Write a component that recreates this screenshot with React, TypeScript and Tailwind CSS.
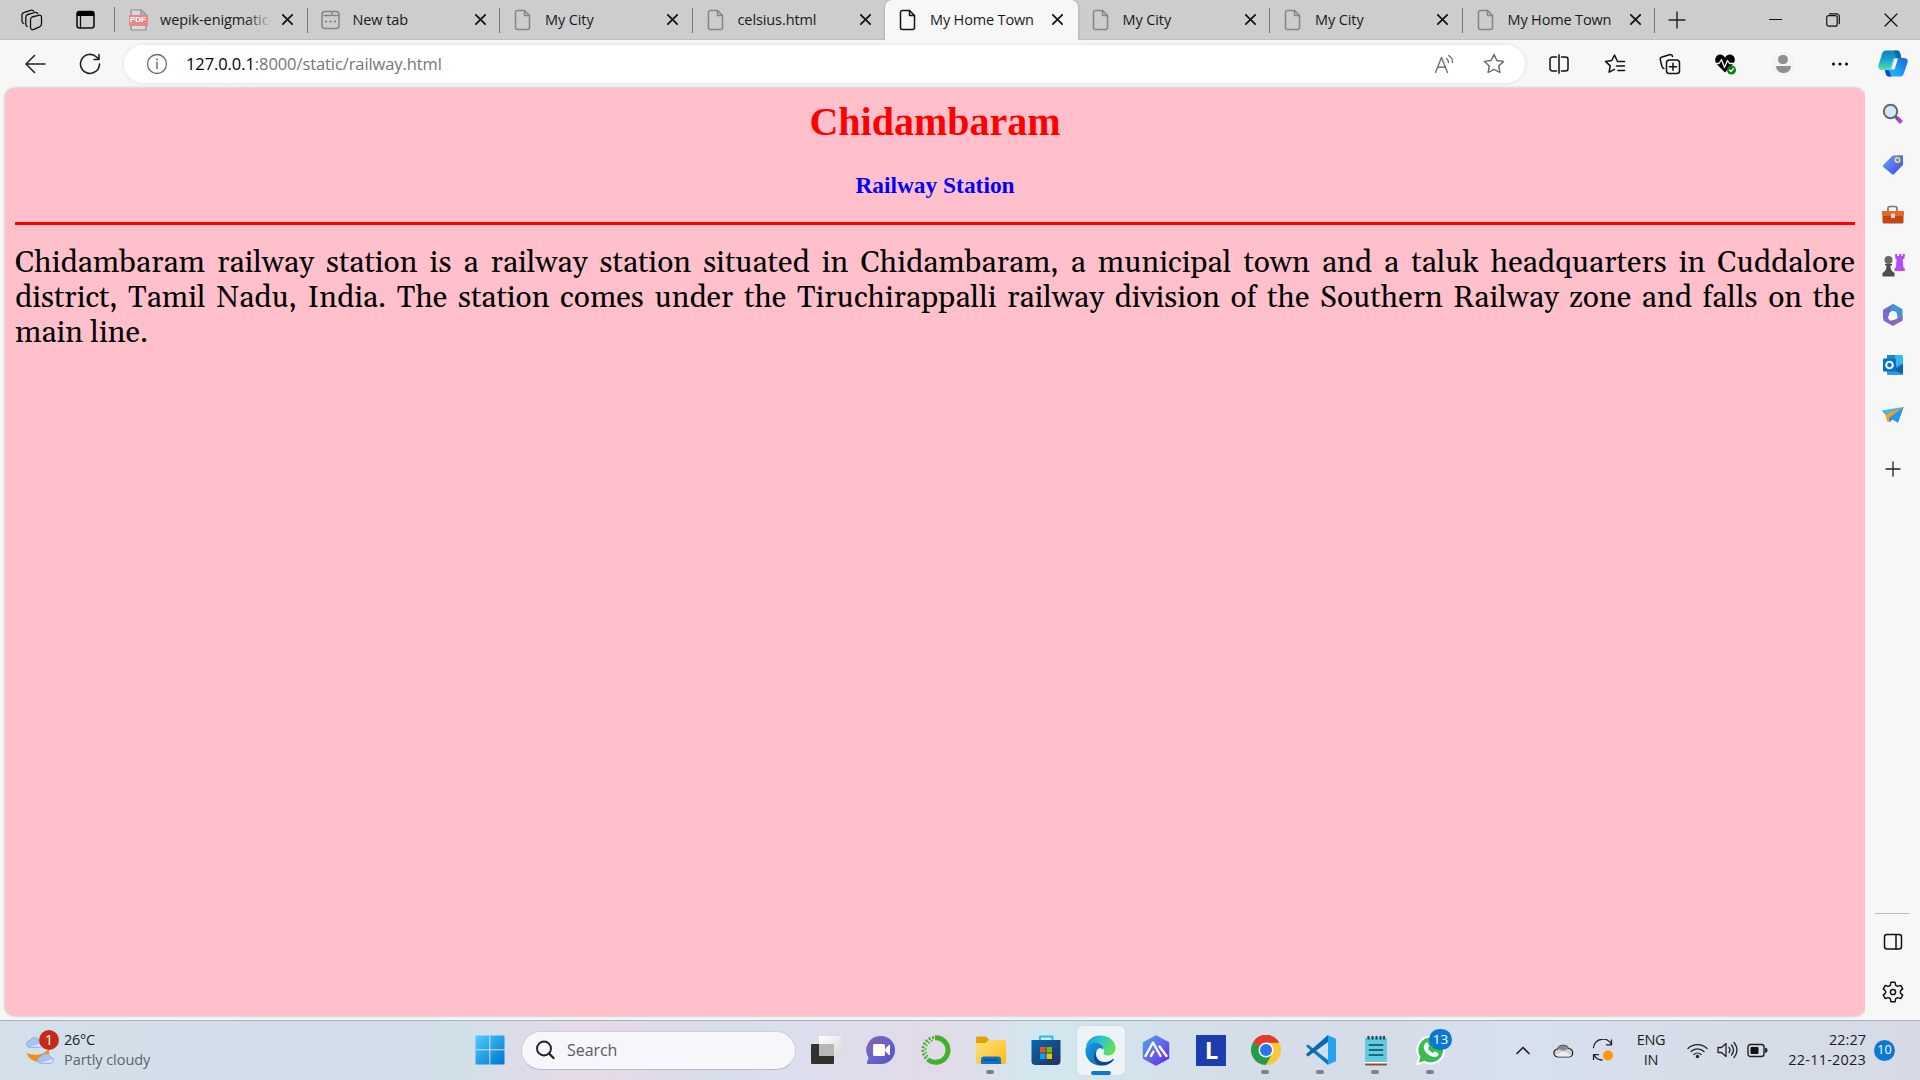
import React from "react";

type Kids = { children?: React.ReactNode; className?: string };

const ui = "font-['Open_Sans','Noto_Sans',sans-serif]";

function Cell({ children, className = "" }: Kids) {
  return <div className={`flex shrink-0 items-center justify-center ${className}`}>{children}</div>;
}

function Svg({ w, h, vb, children, className = "" }: Kids & { w: number; h: number; vb?: string }) {
  return (
    <svg
      width={w}
      height={h}
      viewBox={vb ?? `0 0 ${w} ${h}`}
      fill="none"
      stroke="none"
      strokeLinecap="round"
      strokeLinejoin="round"
      className={`shrink-0 ${className}`}
    >
      {children}
    </svg>
  );
}

function FileIcon({ color }: { color: string }) {
  return (
    <Svg w={18} h={22}>
      <path d="M3.5 1.5h7l5 5v12a2 2 0 0 1-2 2h-10a2 2 0 0 1-2-2v-15a2 2 0 0 1 2-2z" stroke={color} strokeWidth="1.5" />
      <path d="M10.5 1.8v4.7h4.8" stroke={color} strokeWidth="1.5" />
    </Svg>
  );
}

function PdfIcon() {
  return (
    <div className="relative h-[22px] w-[19px]">
      <Svg w={19} h={22}>
        <path d="M3 1h9l5 5v14a1 1 0 0 1-1 1H3a1 1 0 0 1-1-1V2a1 1 0 0 1 1-1z" fill="#d9d9d9" stroke="#8c8c8c" strokeWidth="1.2" />
        <path d="M12 1v5h5z" fill="#bbb" stroke="#8c8c8c" />
      </Svg>
      <span className="absolute left-0 top-[6px] flex h-[11px] w-[19px] items-center justify-center bg-[#e88689] font-['Liberation_Sans',sans-serif] text-[8px] leading-none font-bold text-white">
        PDF
      </span>
    </div>
  );
}

function NewTabIcon() {
  return (
    <Svg w={19} h={20}>
      <rect x="1" y="1.5" width="17" height="17" rx="3" stroke="#858585" strokeWidth="1.5" />
      <path d="M3 5.500h6.500q1.500 0 1.500-1.500V2M11 4q0 1.500 1.500 1.500H18" stroke="#858585" strokeWidth="1.3" />
      <path d="M5 11.5h.01M9.5 11.5h.01M14 11.5h.01" stroke="#777" strokeWidth="2.2" />
    </Svg>
  );
}

function CloseX({ size = 11, sw = 1.7 }: { size?: number; sw?: number }) {
  return (
    <Svg w={size} h={size} vb="0 0 11 11">
      <path d="M.8.8l9.4 9.4M10.2.8L.8 10.2" stroke="#111" strokeWidth={sw} />
    </Svg>
  );
}

const tabs = [
  { title: "wepik-enigmatic-", kind: "pdf" },
  { title: "New tab", kind: "new" },
  { title: "My City", kind: "file" },
  { title: "celsius.html", kind: "file" },
  { title: "My Home Town", kind: "active" },
  { title: "My City", kind: "file" },
  { title: "My City", kind: "file" },
  { title: "My Home Town", kind: "file" },
];

function Tab({ title, kind, sep }: { title: string; kind: string; sep: boolean }) {
  const active = kind === "active";
  return (
    <div
      className={`relative flex h-10 w-[192.5px] shrink-0 items-center pl-[13px] ${active ? "rounded-t-[7px] bg-[#f7f7f7] shadow-[0_0_3px_rgba(0,0,0,0.25)]" : ""}`}
    >
      {active && <span className="absolute -bottom-[3px] left-0 h-[4px] w-full bg-[#f7f7f7]" />}
      <div className="flex w-[20px] shrink-0 justify-center">
        {kind === "pdf" ? <PdfIcon /> : kind === "new" ? <NewTabIcon /> : <FileIcon color={active ? "#111" : "#858585"} />}
      </div>
      <div className="relative ml-[12px] w-[113px] overflow-hidden text-[14.5px] leading-[22px] whitespace-nowrap text-[#1a1a1a]">
        <span className={title === "My Home Town" ? "tracking-[-0.15px]" : "tracking-[-0.1px]"}>{title}</span>
        {kind === "pdf" && <span className="absolute top-0 right-0 h-full w-[28px] bg-linear-to-r from-transparent to-[#cdcdcd]" />}
      </div>
      <div className="ml-[9px]">
        <CloseX />
      </div>
      {sep && <span className="absolute top-[8px] right-0 h-[25px] w-px bg-[#767676]" />}
    </div>
  );
}

function TabStrip() {
  return (
    <div className="flex h-10 items-center border-b border-[#bdbdbd] bg-[#cdcdcd]">
      <Cell className="w-[64px]">
        <Svg w={22} h={22}>
          <g stroke="#111" strokeWidth="1.3">
            <path d="M11 8l6.500-1.700c2-.5 3 .2 3 2v6.500c0 1.500-.7 2.500-2 3l-5.500 2.500c-2 .8-3.500 0-3.500-2V11c0-1.700.3-2.600 1.500-3z" />
            <path d="M6.300 17.500c-1-.4-1.500-1.200-1.500-2.500V8.500c0-1.700.5-2.600 2-3l7-2c1.500-.4 2.500 0 3 1.200" />
            <path d="M2.700 14.500C1.500 14 1 13.200 1 12V6.300C1 4.600 1.700 3.700 3.200 3.300l6.500-2c1.500-.4 2.500 0 3 1" />
          </g>
        </Svg>
      </Cell>
      <Cell className="w-[42px]">
        <Svg w={19} h={19}>
          <rect x="1" y="1.500" width="17" height="16.500" rx="2.500" stroke="#111" strokeWidth="1.600" />
          <path d="M1 3.500A2.500 2.500 0 0 1 3.500 1h12A2.500 2.500 0 0 1 18 3.500V6H1z" fill="#000" />
          <path d="M4.500 6v12" stroke="#111" strokeWidth="1.300" />
        </Svg>
      </Cell>
      <div className="ml-[8px] h-[25px] w-px bg-[#767676]" />
      {tabs.map((t, i) => (
        <Tab key={i} {...t} sep={i !== 3 && i !== 4} />
      ))}
      <Cell className="w-[44px]">
        <Svg w={18} h={18}>
          <path d="M9 1v16M1 9h16" stroke="#222" strokeWidth="1.400" />
        </Svg>
      </Cell>
      <div className="ml-auto flex">
        <Cell className="w-[57px]">
          <Svg w={13} h={3}>
            <path d="M.5 1.500h12" stroke="#111" strokeWidth="1.200" />
          </Svg>
        </Cell>
        <Cell className="w-[57px]">
          <Svg w={14} h={14}>
            <rect x=".7" y="2.700" width="10.500" height="10.500" rx="2" stroke="#111" strokeWidth="1.200" />
            <path d="M3.500.8h7A2.800 2.800 0 0 1 13.300 3.600v7" stroke="#111" strokeWidth="1.200" />
          </Svg>
        </Cell>
        <Cell className="w-[59px]">
          <CloseX size={14} sw={1} />
        </Cell>
      </div>
    </div>
  );
}

const starPath = "M11 1.500l2.900 6 6.600.9-4.800 4.600 1.200 6.500L11 16.400l-5.900 3.100 1.200-6.500L1.500 8.400l6.600-.9z";

function Toolbar() {
  return (
    <div className="flex h-[48px] items-start bg-[#f7f7f7] pt-[5px]">
      <Cell className="h-[37px] w-[70px]">
        <Svg w={21} h={20}>
          <path d="M20 10H1.500M9.500 1.500L1 10l8.500 8.500" stroke="#222" strokeWidth="1.500" />
        </Svg>
      </Cell>
      <Cell className="h-[37px] w-[40px]">
        <Svg w={22} h={22}>
          <path d="M20.500 11A9.500 9.500 0 1 1 17.500 4L19.500 6M20 1.500V6.500H15" stroke="#222" strokeWidth="1.600" />
        </Svg>
      </Cell>
      <div className="ml-[14px] flex h-[38px] w-[1401px] shrink-0 items-center rounded-full bg-white shadow-[0_0_4px_rgba(0,0,0,0.1)]">
        <Cell className="w-[66px]">
          <Svg w={22} h={22}>
            <circle cx="11" cy="11" r="9.500" stroke="#6b6b6b" strokeWidth="1.300" />
            <path d="M11 9.500v6" stroke="#6b6b6b" strokeWidth="1.500" />
            <circle cx="11" cy="6.500" r="1" fill="#6b6b6b" />
          </Svg>
        </Cell>
        <div className="-ml-[4px] text-[16.500px] leading-[24px] tracking-[-0.09px] whitespace-nowrap text-[#767676]">
          <span className="text-black">127.0.0.1</span>:8000/static/railway.html
        </div>
        <Cell className="ml-auto w-[50px]">
          <Svg w={20} h={20}>
            <g stroke="#707070" strokeWidth="1.400">
              <path d="M1.500 18.500L7.500 3.500l6 15M3.700 13.300h7.600" />
              <path d="M12.500 4.500c1.500 1 2 2.400 2 4M14.500 1.500c2.600 1.400 4 3.700 4 7" />
            </g>
          </Svg>
        </Cell>
        <Cell className="mr-[6px] w-[50px]">
          <Svg w={22} h={22}>
            <path d={starPath} stroke="#666" strokeWidth="1.400" />
          </Svg>
        </Cell>
      </div>
      <Cell className="h-[37px] w-[68px]">
        <Svg w={20} h={20}>
          <path d="M7.500 3H3.500a2.500 2.500 0 0 0-2.500 2.500v9A2.500 2.500 0 0 0 3.500 17h4M12.500 3h4A2.500 2.500 0 0 1 19 5.500v9a2.500 2.500 0 0 1-2.500 2.500h-4M10 .8v18.400" stroke="#111" strokeWidth="1.500" />
        </Svg>
      </Cell>
      <Cell className="h-[37px] w-[44px]">
        <Svg w={22} h={22}>
          <path d="M13 7.400L10.500 2 7.800 7.500 1.500 8.400l4.700 4.500-1.100 6.300 5.400-2.900M13.500 8.500h7M12.500 13h8M14 17.500h6.500" stroke="#111" strokeWidth="1.500" />
        </Svg>
      </Cell>
      <Cell className="h-[37px] w-[66px]">
        <Svg w={22} h={22}>
          <rect x="7.500" y="7" width="13" height="13.500" rx="2.800" stroke="#111" strokeWidth="1.500" />
          <path d="M14 10.200v7M10.500 13.700h7M4.800 15.500c-1-.3-1.500-1-1.800-2L1.300 6.800C1 5.300 1.700 4.300 3 4l7.500-2.300c1.500-.4 2.700.3 3 1.800" stroke="#111" strokeWidth="1.500" />
        </Svg>
      </Cell>
      <Cell className="h-[37px] w-[44px]">
        <Svg w={23} h={22}>
          <path d="M11 19.500L2.500 11C-.5 7 2 1.500 6 1.500c2.500 0 4 1.500 5 3 1-1.500 2.500-3 5-3 4 0 6.500 5 3.500 9z" fill="#000" />
          <path d="M0 10.500h5l2.500-4 3 8 3-7 2 3H21" stroke="#f7f7f7" strokeWidth="1.300" />
          <circle cx="17.500" cy="17" r="4.500" fill="#107c10" />
          <path d="M15.500 17l1.400 1.500 2.700-3" stroke="#fff" strokeWidth="1.200" />
        </Svg>
      </Cell>
      <Cell className="h-[37px] w-[72px]">
        <div className="flex h-[28px] w-[28px] flex-col items-center justify-center gap-[2px] rounded-full border border-white bg-[#f4f4f4]">
          <span className="h-[9px] w-[10px] rounded-full bg-[#8f8f8f]" />
          <span className="h-[7px] w-[15px] rounded-t-[2px] rounded-b-full bg-[#8f8f8f]" />
        </div>
      </Cell>
      <Cell className="h-[37px] w-[42px]">
        <Svg w={18} h={4}>
          <circle cx="2.500" cy="2" r="1.600" fill="#111" />
          <circle cx="9" cy="2" r="1.600" fill="#111" />
          <circle cx="15.500" cy="2" r="1.600" fill="#111" />
        </Svg>
      </Cell>
      <Cell className="ml-[4px] h-[37px] w-[55px]">
        <Svg w={30} h={27}>
          <defs>
            <linearGradient id="cpA" x1="0" y1="0" x2="0" y2="1">
              <stop offset="0" stopColor="#0a7fb8" />
              <stop offset=".5" stopColor="#15a8d4" />
              <stop offset="1" stopColor="#5fe0a0" />
            </linearGradient>
            <linearGradient id="cpB" x1="1" y1="0" x2="0" y2="1">
              <stop offset="0" stopColor="#2264d8" />
              <stop offset=".6" stopColor="#1aa2f5" />
              <stop offset="1" stopColor="#27c4fb" />
            </linearGradient>
          </defs>
          <path d="M8 .5h11c2 0 3 1.500 3.500 4l.8 3.500h-5c-2 0-3 1-3.500 3l-1.500 6c-.6 2-1.500 3-3.500 3H4c-3 0-4.300-2-3.400-5.500L4 4C4.700 1.600 6 .5 8 .5z" fill="url(#cpA)" />
          <path d="M22 26.500H11c-2 0-3-1.500-3.500-4L7 20h3c2 0 3-1 3.500-3L15.300 11c.6-2 1.500-3 3.500-3H26c3 0 4.300 1.500 3.400 5L26 23c-.7 2.400-2 3.500-4 3.500z" fill="url(#cpB)" />
          <path d="M16.500 8.500h3.500l-3.500 11h-3.500z" fill="#f7f7f7" />
          <path d="M16 .5h3c2 0 3 1.500 3.500 4l.8 3.500h-4C17 8 17 3 16 .5z" fill="#096ca8" />
          <path d="M7 20h3.500c1.500 1 1.500 5 3.500 6.500h-3c-2 0-3-1.500-3.500-4z" fill="#1746c7" />
        </Svg>
      </Cell>
    </div>
  );
}

function Sidebar() {
  return (
    <div className="flex w-[55px] shrink-0 flex-col items-center bg-[#f7f7f7]">
      <Cell className="h-[51px]">
        <Svg w={22} h={22}>
          <path d="M14.500 14.500l5 5" stroke="#b13cf0" strokeWidth="4" strokeLinecap="butt" />
          <path d="M13 13l2.500 2.500" stroke="#666" strokeWidth="2.500" />
          <circle cx="8.500" cy="8.500" r="6.700" fill="#cfe9fb" stroke="#666" strokeWidth="2" />
        </Svg>
      </Cell>
      <Cell className="h-[51px]">
        <Svg w={22} h={22}>
          <defs>
            <linearGradient id="tagG" x1="0" y1="0" x2="1" y2="1">
              <stop offset="0" stopColor="#70a5ff" />
              <stop offset="1" stopColor="#3848df" />
            </linearGradient>
          </defs>
          <path d="M11.500 1.500L19.500 1q1.500 0 1.500 1.500V10q0 1-.8 1.800l-8 8.200q-1.200 1.200-2.400 0L1.300 13q-1-1 0-2L10 2.200q.6-.6 1.500-.7z" fill="url(#tagG)" />
          <circle cx="15.500" cy="6" r="2.200" stroke="#ffe04f" strokeWidth="1.500" fill="#667bd8" />
        </Svg>
      </Cell>
      <Cell className="h-[50px]">
        <Svg w={24} h={20}>
          <path d="M7 6V3.500A2 2 0 0 1 9 1.500h5a2 2 0 0 1 2 2V6" stroke="#777" strokeWidth="1.700" />
          <rect x="1.500" y="6" width="21" height="12.500" rx="1.500" fill="#c24813" />
          <path d="M1 6h22v3q0 2-2 2H3q-2 0-2-2z" fill="#e8672a" />
          <rect x="10" y="8.500" width="4" height="4.500" rx=".8" fill="#ddd" />
        </Svg>
      </Cell>
      <Cell className="h-[50px]">
        <Svg w={24} h={24}>
          <path d="M14 1h2.200v2h2V1h2.200v2h1.300V1H24l-.7 5h-1.500l.5 8 1.500 1.500V18H13.500v-2.500L15 14l.5-8h-1z" fill="#b84df3" />
          <circle cx="7.500" cy="7" r="4" fill="#686868" />
          <path d="M4 11h7v1.500H9.500c0 4 1 5.500 4 7.500v3.500h-12V20c3-2 4-3.500 4-7.500H4z" fill="#4d4d4d" />
        </Svg>
      </Cell>
      <Cell className="h-[50px]">
        <Svg w={22} h={22}>
          <path d="M11 0l9 5v5l-5-3-5-.5L5 14l-4 .5V6z" fill="#5b62c8" />
          <path d="M11 0l9.500 5.500v11L16 19l-1-9-8-4z" fill="#4094d8" />
          <path d="M20.500 12v4.500L11 22l-8-4.500 9-1.500z" fill="#8d65bd" />
          <path d="M1 6l6-3.500L6 14l5 7.500L1.500 16.500z" fill="#8367d2" />
          <circle cx="11" cy="11" r="4" fill="#f7f7f7" />
        </Svg>
      </Cell>
      <Cell className="h-[50px]">
        <Svg w={22} h={22}>
          <rect x="5" y="1" width="16" height="14" rx="1.500" fill="#35b8f1" />
          <path d="M5 1h8v7H5z" fill="#1689d4" />
          <path d="M5 10l8 3 8-4.500V20q0 1-1 1H6q-1 0-1-1z" fill="#2b9be3" />
          <path d="M11 16l10-6v10z" fill="#0f5fa8" />
          <rect x="1" y="4.500" width="13" height="13" rx="1.300" fill="#0873c5" />
          <circle cx="7.500" cy="11" r="3.300" stroke="#fff" strokeWidth="2" />
        </Svg>
      </Cell>
      <Cell className="h-[50px]">
        <Svg w={23} h={18}>
          <path d="M.5 4.500L22.500 1 6.500 11z" fill="#46b5f4" />
          <path d="M22.500 1L17 16.500l-5.500-3L8 16.500 6.500 10z" fill="#2887e8" />
          <path d="M22.500 1L4.500 8.500l1.800 8 2.500-5z" fill="#f5a50b" />
          <path d="M22.500 1L9 11l3 2.500 5 3z" fill="#3093ed" />
        </Svg>
      </Cell>
      <Cell className="mt-[3px] h-[52px]">
        <Svg w={16} h={16}>
          <path d="M8 1v14M1 8h14" stroke="#222" strokeWidth="1.300" />
        </Svg>
      </Cell>
      <div className="mt-auto h-px w-[35px] bg-[#bcbcbc]" />
      <Cell className="mt-[3px] h-[50px]">
        <Svg w={20} h={18}>
          <rect x="1.500" y="1.500" width="17" height="14.500" rx="2.500" stroke="#111" strokeWidth="1.500" />
          <path d="M13 2v14" stroke="#111" strokeWidth="1.500" />
        </Svg>
      </Cell>
      <Cell className="mb-[3px] h-[50px]">
        <Svg w={22} h={22}>
          <path d="M9 1.200h4l.7 3.100 2 1.100 3-1 2 3.500-2.300 2.100v2l2.300 2.100-2 3.500-3-1-2 1.100-.7 3.100H9l-.7-3.100-2-1.100-3 1-2-3.500L3.600 12v-2L1.300 7.900l2-3.500 3 1 2-1.100z" stroke="#111" strokeWidth="1.500" />
          <circle cx="11" cy="11" r="2.600" stroke="#111" strokeWidth="1.500" />
        </Svg>
      </Cell>
    </div>
  );
}

const lines = [
  "Chidambaram railway station is a railway station situated in Chidambaram, a municipal town and a taluk headquarters in Cuddalore",
  "district, Tamil Nadu, India. The station comes under the Tiruchirappalli railway division of the Southern Railway zone and falls on the",
];

function Page() {
  return (
    <main className="mb-[4px] ml-[5px] min-w-0 flex-1 rounded-[10px] bg-[#ffc0cb] px-[10px] shadow-[0_0_3px_rgba(0,0,0,0.3)]">
      <h1 className="pt-[11px] text-center font-['Liberation_Serif',serif] text-[40px] leading-[46px] font-bold text-[#ff0000]">Chidambaram</h1>
      <h3 className="mt-[27px] text-center font-['Liberation_Serif',serif] text-[23.400px] leading-[27px] font-bold text-[#0000ff]">Railway Station</h3>
      <hr className="mt-[23px] h-[3px] border-0 bg-[#ff0000]" />
      <p className="mt-[21px] font-[Gelasio,Georgia,'Liberation_Serif',serif] text-[30px] leading-[35px] text-black">
        {lines.map((l) => (
          <span key={l} className="block whitespace-nowrap [text-align-last:justify]">
            {l}
          </span>
        ))}
        <span className="block">main line.</span>
      </p>
    </main>
  );
}

function TaskItem({ children, dot = false }: { children: React.ReactNode; dot?: boolean }) {
  return (
    <div className="relative flex h-full w-[55px] shrink-0 items-center justify-center">
      {children}
      {dot && <span className="absolute bottom-[5px] left-[23px] h-[4px] w-[8px] rounded-full bg-[#7d8087]" />}
    </div>
  );
}

function TaskApps() {
  return (
    <>
      <TaskItem>
        <Svg w={30} h={30}>
          <defs>
            <linearGradient id="tvA" x1="0" y1="0" x2="1" y2="1">
              <stop offset="0" stopColor="#fff" />
              <stop offset="1" stopColor="#d9d9d9" />
            </linearGradient>
          </defs>
          <rect x="0" y="9" width="23" height="20" rx="1" fill="#31322f" />
          <rect x="8" y="1" width="22" height="20" rx="1" fill="url(#tvA)" />
          <path d="M8 9h15v12H8z" fill="#b7b7b7" />
        </Svg>
      </TaskItem>
      <TaskItem>
        <Svg w={30} h={30}>
          <defs>
            <linearGradient id="chG" x1="0" y1="0" x2="1" y2="1">
              <stop offset="0" stopColor="#8a5fa8" />
              <stop offset=".5" stopColor="#6a63cc" />
              <stop offset="1" stopColor="#4e52c2" />
            </linearGradient>
          </defs>
          <path d="M15 1a14 14 0 1 1 0 28H2q-1.500 0-1-1.500l1.500-5A14 14 0 0 1 15 1z" fill="url(#chG)" />
          <rect x="7" y="9" width="12" height="12" rx="1.500" fill="#fff" />
          <path d="M20 13.500l3.500-3.500v10L20 16.500z" fill="#fff" stroke="#fff" />
        </Svg>
      </TaskItem>
      <TaskItem>
        <Svg w={30} h={30}>
          <path d="M14 2.700A12.300 12.300 0 1 1 7 24.600" stroke="#43b02a" strokeWidth="5" strokeLinecap="butt" />
          <path d="M13 2.500A12.500 12.500 0 0 0 7 25" stroke="#43b02a" strokeWidth="3" strokeDasharray="2 1.600" strokeLinecap="butt" />
          <path d="M11.500 5.500A10.500 10.500 0 0 0 7.500 22.500" stroke="#43b02a" strokeWidth="1.800" strokeDasharray="1.500 2" strokeLinecap="butt" />
        </Svg>
      </TaskItem>
      <TaskItem dot>
        <Svg w={30} h={30}>
          <defs>
            <linearGradient id="foG" x1="0" y1="0" x2="1" y2="1">
              <stop offset="0" stopColor="#ffe181" />
              <stop offset="1" stopColor="#fbbc12" />
            </linearGradient>
          </defs>
          <path d="M0 3q0-1.500 1.500-1.500H10l3 3-2 4H0z" fill="#e2a004" />
          <path d="M0 8h9.500l3-3H28.500Q30 5 30 6.500v21q0 1.500-1.500 1.500h-27Q0 29 0 27.500z" fill="url(#foG)" />
          <path d="M5 29v-4.500q0-3 3-3h14q3 0 3 3V29z" fill="#0f72c8" />
          <path d="M9 25h12" stroke="#084f91" strokeWidth="1.500" />
        </Svg>
      </TaskItem>
      <TaskItem>
        <Svg w={30} h={30}>
          <defs>
            <linearGradient id="stG" x1="0" y1="0" x2="1" y2="1">
              <stop offset="0" stopColor="#0667b7" />
              <stop offset="1" stopColor="#233156" />
            </linearGradient>
          </defs>
          <path d="M9 6V1.500h12.500V6" stroke="#29bdf0" strokeWidth="2" />
          <path d="M.5 5h29v21q0 4-4 4h-21q-4 0-4-4z" fill="url(#stG)" />
          <path d="M9 12h5.500v5.500H9z" fill="#f25022" />
          <path d="M15.500 12H21v5.500h-5.500z" fill="#7fba00" />
          <path d="M9 18.500h5.500V24H9z" fill="#00a4ef" />
          <path d="M15.500 18.500H21V24h-5.500z" fill="#ffb900" />
        </Svg>
      </TaskItem>
      <TaskItem>
        <div className="relative flex h-[49px] w-[48px] items-center justify-center rounded-[5px] bg-[#edf4f8] shadow-[0_0_1px_rgba(0,0,0,0.2)]">
          <Svg w={31} h={31}>
            <defs>
              <linearGradient id="edA" x1="0" y1="0" x2="1" y2=".4">
                <stop offset="0" stopColor="#1c8fd6" />
                <stop offset=".5" stopColor="#2fc2cf" />
                <stop offset="1" stopColor="#5fe05a" />
              </linearGradient>
              <linearGradient id="edB" x1="0" y1="0" x2="1" y2="1">
                <stop offset="0" stopColor="#1b9de2" />
                <stop offset="1" stopColor="#0a63b8" />
              </linearGradient>
            </defs>
            <path d="M.8 12C2 5 8 .5 15.500.5 24 .5 30.500 6 30.500 13c0 4.500-3 7.500-7 7.500-3.500 0-5.500-1-5-2.500 1-1.500 1-4-1-6C13 7.500 4 8 .8 12z" fill="url(#edA)" />
            <path d="M.5 15C1 10 5 7.800 9.500 7.800c5 0 9 2.200 9 7.200-2-2.500-5-2-6.500 0-3 5 1 12 8 14-3 1.600-6 1.800-9 .8C4.500 28 0 22 .5 15z" fill="url(#edB)" />
            <path d="M11.500 16c-3 6 2 11.500 8.500 11 3.500 0 6.500-1.500 8-3 .8-.7 1.300 0 .8.800C26 29 21 31 16 30.500 9 29.500 7 20 11.500 16z" fill="#12468a" />
          </Svg>
          <span className="absolute bottom-0 left-[14px] h-[4px] w-[20px] rounded-full bg-[#0b78d4]" />
        </div>
      </TaskItem>
      <TaskItem>
        <Svg w={28} h={31}>
          <defs>
            <linearGradient id="puG" x1="0" y1="0" x2="1" y2="1">
              <stop offset="0" stopColor="#4aa2e8" />
              <stop offset=".5" stopColor="#6367ec" />
              <stop offset="1" stopColor="#6a22ec" />
            </linearGradient>
          </defs>
          <path d="M14 1.500l12 6.500v15L14 29.500 2 23V8z" fill="url(#puG)" stroke="url(#puG)" strokeWidth="2.500" />
          <path d="M3.500 21L11 7.500 18.500 21M9 21l2.500-4.500M17.500 11.500L24.500 21" stroke="#fff" strokeWidth="2.400" />
        </Svg>
      </TaskItem>
      <TaskItem>
        <div className="flex h-[31px] w-[30px] items-center justify-center bg-[#1d3cae] pl-[2px] text-[24px] leading-none font-bold text-white">L</div>
      </TaskItem>
      <TaskItem dot>
        <Svg w={30} h={30}>
          <path d="M15 15L2 7.500A15 15 0 0 1 28 7.500z" fill="#e33b2e" />
          <path d="M15 15L2 7.500A15 15 0 0 0 15 30l6.500-11.300z" fill="#279b48" />
          <path d="M15 7.500h13A15 15 0 0 1 15 30l6.500-11.300z" fill="#fcc934" />
          <path d="M15 0A15 15 0 0 1 28 7.500H15a7.500 7.500 0 0 0-6.500 3.700L2 7.500A15 15 0 0 1 15 0z" fill="#e33b2e" />
          <circle cx="15" cy="15" r="7.500" fill="#fff" />
          <circle cx="15" cy="15" r="6" fill="#2b74ea" />
        </Svg>
      </TaskItem>
      <TaskItem dot>
        <Svg w={30} h={30}>
          <path d="M2 9.500L22 25v5L.8 12q-1-1 .2-2z" fill="#1277bd" />
          <path d="M2 21.500L22 7V0L.8 18.500q-1 1 .2 2.300z" fill="#0c68ad" />
          <path d="M22 .3l7 3q1 .5 1 1.500v20.400q0 1-1 1.500l-7 3z" fill="#27a2ef" />
        </Svg>
      </TaskItem>
      <TaskItem dot>
        <Svg w={24} h={31}>
          <rect x="1" y="27" width="22" height="3.500" rx="1" fill="#9b4b10" />
          <path d="M1 3h22v25H1z" fill="#67c9dd" />
          <path d="M1 27h22v1.500H1z" fill="#fff" />
          <path d="M4.500 2v1.500M8.500 2v1.500M12.500 2v1.500M16.500 2v1.500M20 2v1.500" stroke="#15556e" strokeWidth="2.400" />
          <path d="M5.500 10h13M5.500 15h13M5.500 20h13" stroke="#146c88" strokeWidth="1.900" />
        </Svg>
      </TaskItem>
      <TaskItem dot>
        <Svg w={30} h={30}>
          <path d="M15 1.500A13.500 13.500 0 1 1 8.500 27L1.300 29l2-7A13.500 13.500 0 0 1 15 1.500z" fill="#39bd51" stroke="#fff" strokeWidth="2.200" />
          <path d="M9.500 8c1-1 2-.8 2.500.3l1 2.300c.3.800-.2 1.400-1.200 2.400 1 2.300 2.700 3.900 5.200 5 1-1.300 1.500-1.700 2.300-1.400l2.400 1.200c1.200.6.8 2.300-.2 3.200-1.500 1.400-4 1.300-6.800-.1-3.600-1.800-5.600-4.200-6.700-7-.7-2.300.3-4.600 1.500-5.900z" fill="#fff" />
        </Svg>
        <span className="absolute top-[8px] left-[26px] flex h-[21px] w-[23px] items-center justify-center rounded-full bg-[#0c78d3] text-[13.500px] leading-none text-white">13</span>
      </TaskItem>
    </>
  );
}

function Cloud({ w, h }: { w: number; h: number }) {
  return (
    <Svg w={w} h={h} vb="0 0 18 12">
      <path d="M4 11.500a3.500 3.500 0 0 1 0-7A5 5 0 0 1 13.300 5a3.300 3.300 0 0 1 .7 6.500z" fill="#a9c1f0" stroke="#7f9fdc" strokeWidth=".6" />
      <path d="M4 10.800h10a2 2 0 0 0 1-3.500z" fill="#d8e5fb" />
    </Svg>
  );
}

function Taskbar() {
  return (
    <footer className="flex h-[60px] items-center border-t border-[#a9b0b8] bg-[linear-gradient(90deg,#d3dfe9_0%,#d1dee9_22%,#d1e0e8_24%,#e6d9e8_30%,#e5d9e8_32%,#d8ddea_37%,#dcdeed_42%,#e2dae8_49%,#d3e7ee_54%,#d3dfe9_62%,#d5dce8_72%,#d6e1ed_79%,#d6dde9_88%,#d5dae6_100%)] pb-px">
      <div className="flex w-[462px] shrink-0 items-center pl-[24px]">
        <div className="relative h-[38px] w-[40px]">
          <div className="absolute top-[5px] left-[1px]"><Cloud w={20} h={12} /></div>
          <Svg w={28} h={18} className="absolute top-[16px] left-[2px]">
            <path d="M23 .5C20 7 10 10 .5 6c3 9 15 12 22.500 5z" fill="#f08f19" />
          </Svg>
          <div className="absolute top-[21px] left-[13px]"><Cloud w={18} h={12} /></div>
          <span className="absolute -top-px left-[15px] flex h-[20px] w-[20px] items-center justify-center rounded-full bg-[#c42b1c] text-[14px] leading-none text-white">1</span>
        </div>
        <div className="text-[14.500px] leading-[20px] text-[#1d2226]">
          <div className="tracking-[-0.3px]">26°C</div>
          <div className="tracking-[-0.05px] text-[#5a646c]">Partly cloudy</div>
        </div>
      </div>
      <TaskItem>
        <Svg w={30} h={30}>
          <defs>
            <linearGradient id="wiG" gradientUnits="userSpaceOnUse" x1="0" y1="0" x2="30" y2="30">
              <stop offset="0" stopColor="#4cd0fb" />
              <stop offset="1" stopColor="#0070d0" />
            </linearGradient>
          </defs>
          <path d="M1 .5h13.300v13.800H.5V1zM15.300.5H29.500v13.800H15.300zM.5 15.300h13.800v14.200H.5zM15.300 15.300h14.200v14.200H15.300z" fill="url(#wiG)" />
        </Svg>
      </TaskItem>
      <div className="ml-[4px] flex h-[39px] w-[275px] shrink-0 items-center rounded-full border border-[#d0cedb] border-b-[#b9b8c8] bg-[#f6f6fb] pl-[13px]">
        <Svg w={20} h={20}>
          <circle cx="9" cy="8.500" r="7" stroke="#222" strokeWidth="1.900" />
          <path d="M14 13.500l4.500 4.500" stroke="#222" strokeWidth="2.300" />
        </Svg>
        <span className="ml-[12px] text-[16px] leading-[24px] tracking-[-0.050px] text-[#5c5c60]">Search</span>
      </div>
      <div className="ml-[2px] flex h-full">
        <TaskApps />
      </div>
      <div className="ml-auto flex h-full items-center pr-[25px] text-[#1b1e22]">
        <Cell className="w-[40px]">
          <Svg w={14} h={9}>
            <path d="M1 7.500l6-6 6 6" stroke="#222" strokeWidth="1.700" />
          </Svg>
        </Cell>
        <Cell className="w-[40px]">
          <Svg w={21} h={15}>
            <path d="M5 14a4 4 0 0 1-.3-8A6 6 0 0 1 15.500 5.500a4.300 4.300 0 0 1 .8 8.500z" fill="#d0d0d0" stroke="#222" strokeWidth="1.200" />
            <path d="M4.700 6A6 6 0 0 1 15.500 5.500l-5 2.500z" fill="#888" />
            <path d="M2.500 12l8-4 8 4.500-2 1H5z" fill="#eee" />
          </Svg>
        </Cell>
        <Cell className="w-[40px]">
          <Svg w={22} h={22}>
            <path d="M1.500 8.500A9.500 9.500 0 0 1 19.500 5.500M19.500 1v4.800H14.500M1.500 20.500v-4.800H6.500M2 16a9.500 9.500 0 0 0 8 5" stroke="#222" strokeWidth="1.300" />
            <circle cx="16" cy="16.500" r="5" fill="#ff9800" />
          </Svg>
        </Cell>
        <div className="w-[56px] text-center text-[14.500px] leading-[20px] tracking-[-0.300px]">
          <div>ENG</div>
          <div>IN</div>
        </div>
        <div className="ml-[8px] flex items-center gap-[9px]">
          <Svg w={21} h={17}>
            <path d="M1 6.500a13.500 13.500 0 0 1 19 0M4 9.500a9.200 9.200 0 0 1 13 0M7 12.500a5 5 0 0 1 7 0" stroke="#222" strokeWidth="1.300" />
            <circle cx="10.500" cy="14.500" r="1.700" fill="#222" />
          </Svg>
          <Svg w={21} h={18}>
            <path d="M1 6.500h3.500L9 2.500v13l-4.500-4H1z" stroke="#222" strokeWidth="1.300" />
            <path d="M12 6.500q2 2.500 0 5M14.500 4q4 5 0 10M17 1.500q6 7.500 0 15" stroke="#222" strokeWidth="1.300" />
          </Svg>
          <Svg w={21} h={15}>
            <rect x="1" y="1.500" width="16" height="12" rx="2.500" stroke="#222" strokeWidth="1.400" />
            <rect x="3.500" y="4" width="8" height="7" rx="1" fill="#111" />
            <path d="M18.500 5.500v4l1.500-1v-2z" fill="#222" stroke="#222" />
          </Svg>
        </div>
        <div className="w-[98px] text-right text-[14.500px] leading-[20px] whitespace-nowrap">
          <div>22:27</div>
          <div className="tracking-[0.200px]">22-11-2023</div>
        </div>
        <span className="ml-[8px] flex h-[21px] w-[21px] items-center justify-center rounded-full bg-[#0c78d3] text-[12.500px] leading-none text-white">10</span>
      </div>
    </footer>
  );
}

export default function App() {
  return (
    <div className={`flex h-[1080px] w-[1920px] flex-col overflow-hidden bg-[#f7f7f7] ${ui}`}>
      <TabStrip />
      <Toolbar />
      <div className="flex min-h-0 flex-1">
        <Page />
        <Sidebar />
      </div>
      <Taskbar />
    </div>
  );
}
